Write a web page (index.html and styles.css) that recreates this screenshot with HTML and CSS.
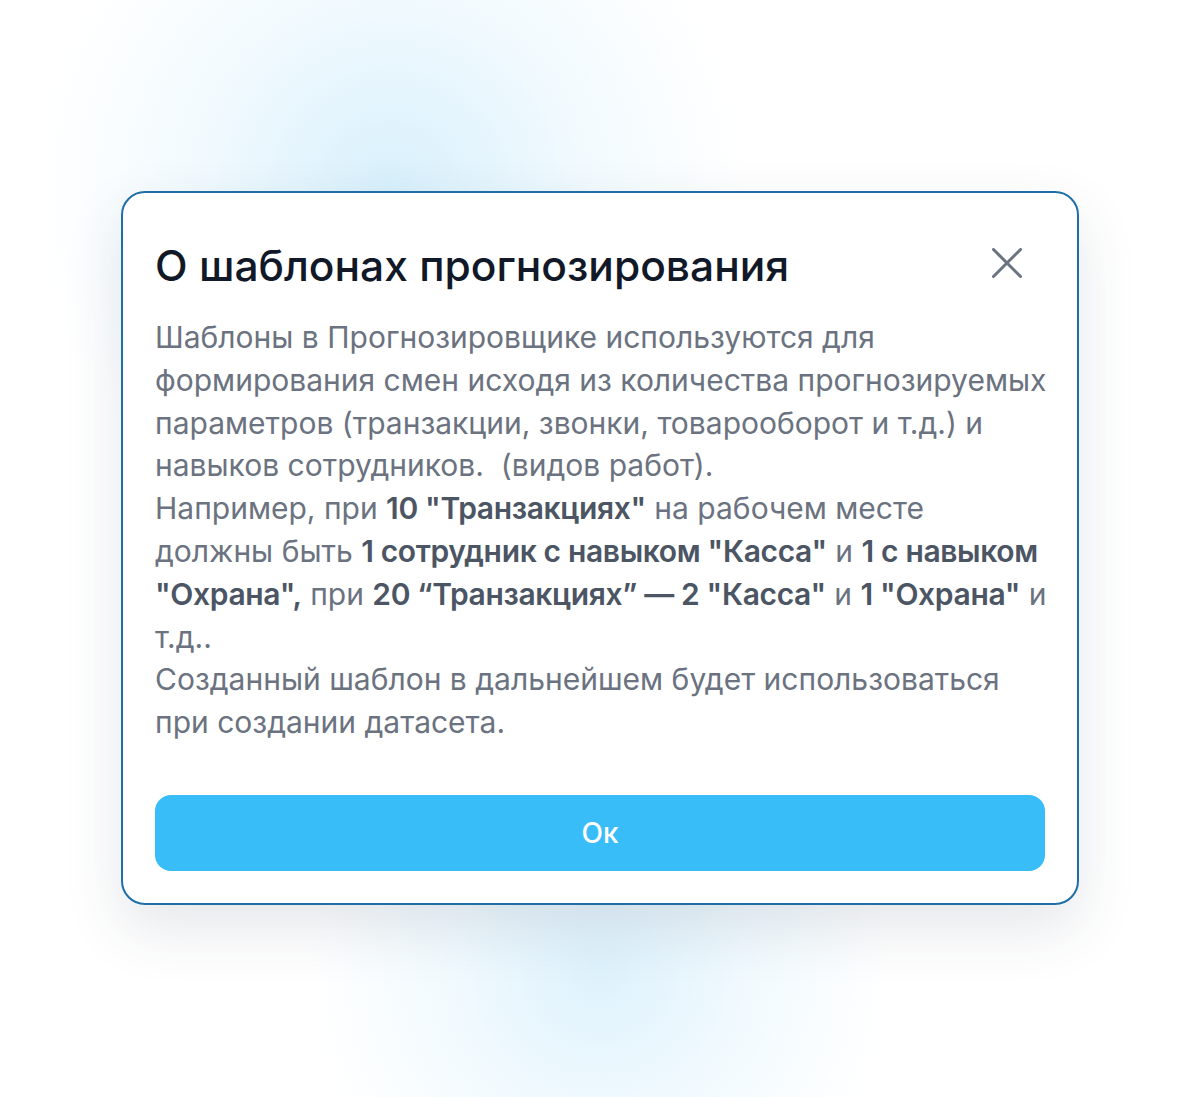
FILE: index.html
```html
<!DOCTYPE html>
<html>
<head>
<meta name="viewport" content="width=device-width, initial-scale=1">
<link rel="stylesheet" href="styles.css">
</head>
<body>
<div class="backdrop">
  <div class="glow glow-top"></div>
  <div class="glow glow-bottom"></div>

  <div class="modal">
    <div class="modal-head">
      <h3 class="modal-title">О шаблонах прогнозирования</h3>
      <button class="close-btn" type="button">
        <svg width="30" height="30" viewBox="0 0 30 30" fill="none">
          <path d="M1.5 1.5L28.5 28.5M28.5 1.5L1.5 28.5" stroke="#6b7280" stroke-width="3" stroke-linecap="round"/>
        </svg>
      </button>
    </div>

    <!-- lines are broken by hand so the text keeps its layout -->
    <p class="modal-text">
      Шаблоны в Прогнозировщике используются для<br>
      формирования смен исходя из количества прогнозируемых<br>
      параметров (транзакции, звонки, товарооборот и т.д.) и<br>
      навыков сотрудников.&nbsp; (видов работ).<br>
      Например, при <b>10 "Транзакциях"</b> на рабочем месте<br>
      должны быть <b>1 сотрудник с навыком "Касса"</b> и <b>1 с навыком</b><br>
      <b>"Охрана",</b> при <b>20 “Транзакциях” — 2 "Касса"</b> и <b>1 "Охрана"</b> и<br>
      т.д..<br>
      Созданный шаблон в дальнейшем будет использоваться<br>
      при создании датасета.
    </p>

    <button class="ok-btn" type="button">Ок</button>
  </div>
</div>
</body>
</html>
```

FILE: styles.css
```css
* {box-sizing: border-box;}

body {
  margin: 0;
  background: #fff;
  font-family: Inter, "Noto Sans", sans-serif;
}

.backdrop {
  position: relative;
  width: 1200px;
  height: 1097px;
  overflow: hidden;
  display: flex;
  justify-content: center;
  padding-top: 191px;
}

/* soft blue blobs behind the dialog */
.glow {
  position: absolute;
  border-radius: 50%;
  pointer-events: none;
}

.glow-top {
  left: 30px;
  top: -170px;
  width: 720px;
  height: 720px;
  background: radial-gradient(circle, rgba(125, 205, 245, 0.3) 0%, rgba(160, 220, 250, 0.13) 40%, rgba(255, 255, 255, 0) 70%);
}

.glow-bottom {
  left: 290px;
  top: 690px;
  width: 620px;
  height: 560px;
  background: radial-gradient(circle, rgba(125, 205, 245, 0.26) 0%, rgba(160, 220, 250, 0.12) 40%, rgba(255, 255, 255, 0) 70%);
}

.modal {
  position: relative;
  width: 958px;
  height: 714px;
  background: #fff;
  border: 2px solid #1f6fa6;
  border-radius: 24px;
  padding: 43px 32px 32px;
  display: flex;
  flex-direction: column;
  box-shadow: 0 24px 60px rgba(40, 60, 80, 0.12);
}

.modal-head {
  display: flex;
  align-items: center;
  justify-content: space-between;
}

.modal-title {
  margin: 0;
  font-size: 42.5px;
  font-weight: 500;
  line-height: 60px;
  color: #111827;
}

.close-btn {
  border: none;
  background: none;
  padding: 0;
  margin: 0 23px 6px 0;
  display: flex;
  cursor: pointer;
}

.modal-text {
  margin: 20px 0 0;
  font-size: 30px;
  line-height: 42.8px;
  color: #6b7280;
  white-space: nowrap;
}

.modal-text b {
  font-weight: 600;
  color: #4b5563;
  letter-spacing: -0.35px;
}

.ok-btn {
  margin-top: auto;
  height: 76px;
  border: none;
  border-radius: 16px;
  background: #38bdf8;
  color: #fff;
  font-family: inherit;
  font-size: 28px;
  font-weight: 500;
  cursor: pointer;
}
```
